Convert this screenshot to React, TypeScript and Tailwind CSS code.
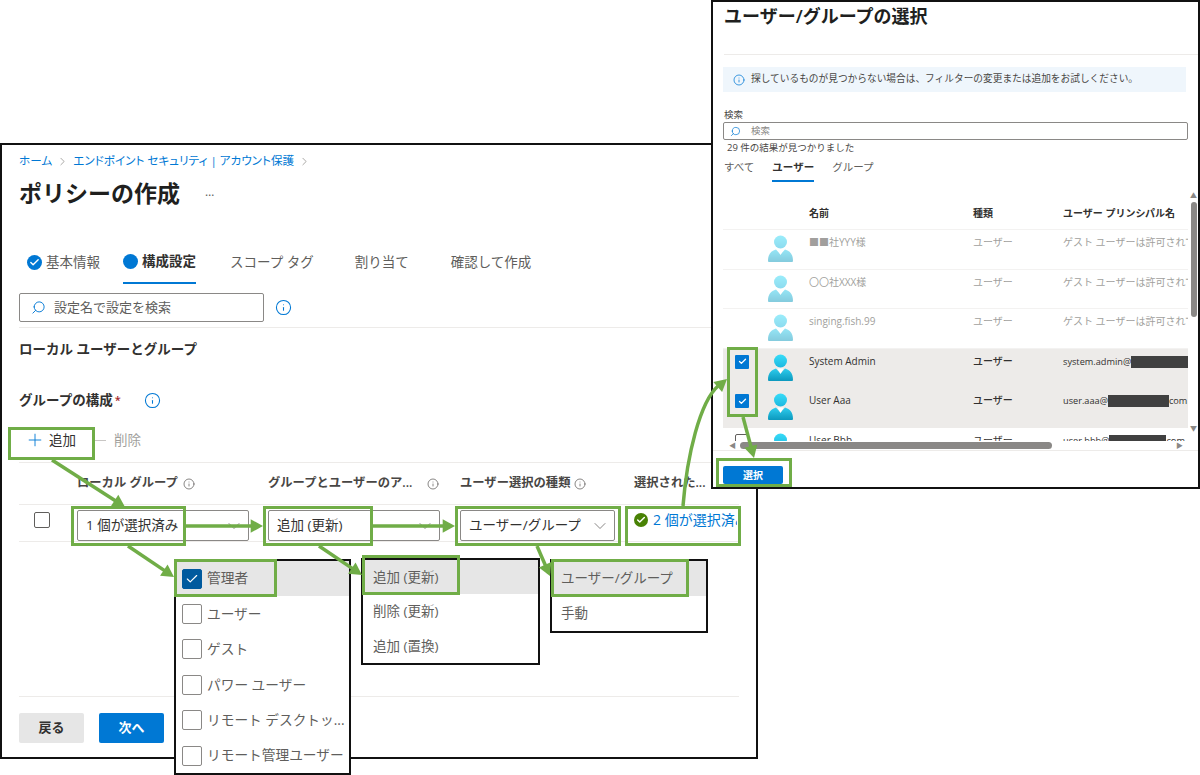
import { ChevronDown, ChevronRight, Check, Info, Plus, Search } from 'lucide-react';

const font = { fontFamily: '"Open Sans", "Noto Sans CJK JP", sans-serif' };

const greenBoxes = [
  [8, 427, 87, 33],
  [71, 506, 115, 40],
  [263, 506, 110, 40],
  [455, 506, 166, 40],
  [625, 506, 116, 40],
  [174, 559, 103, 38],
  [362, 555, 98, 40],
  [551, 559, 138, 38],
  [727, 347, 31, 70],
  [716, 458, 76, 29],
];

const straightArrows = [
  [52, 460, 125, 507],
  [128, 546, 174, 577],
  [186, 526, 263, 526],
  [319, 546, 362, 575],
  [373, 526, 455, 526],
  [537, 546, 550, 576],
  [743, 417, 754, 458],
];

function arrowHead(x1: number, y1: number, x2: number, y2: number) {
  const a = Math.atan2(y2 - y1, x2 - x1);
  const size = 14;
  const spread = 0.5;
  const p1 = [x2 - size * Math.cos(a - spread), y2 - size * Math.sin(a - spread)];
  const p2 = [x2 - size * Math.cos(a + spread), y2 - size * Math.sin(a + spread)];
  return `${x2},${y2} ${p1[0]},${p1[1]} ${p2[0]},${p2[1]}`;
}

function Annotations() {
  return (
    <svg className="absolute left-0 top-0 z-30 pointer-events-none" width="1200" height="775" fill="none">
      {greenBoxes.map(([x, y, w, h]) => (
        <rect key={`${x}-${y}`} x={x + 1.5} y={y + 1.5} width={w - 3} height={h - 3} stroke="#70ad47" strokeWidth="3" />
      ))}
      {straightArrows.map(([x1, y1, x2, y2]) => (
        <g key={`${x1}-${y1}`}>
          <line x1={x1} y1={y1} x2={x2 - (x2 - x1) * 0.1} y2={y2 - (y2 - y1) * 0.1} stroke="#70ad47" strokeWidth="3.5" />
          <polygon points={arrowHead(x1, y1, x2, y2)} fill="#70ad47" />
        </g>
      ))}
      <path d="M683 506C687 455 700 402 718 386" stroke="#70ad47" strokeWidth="3.5" />
      <polygon points={arrowHead(712, 392, 727, 379)} fill="#70ad47" />
    </svg>
  );
}

function InfoIcon({ big }: { big?: boolean }) {
  if (big) return <Info size={17} strokeWidth={1.5} className="text-[#0078d4] shrink-0" />;
  return <Info size={12} strokeWidth={1.5} className="text-[#605e5c] shrink-0" />;
}

function SelectBox({ label, className }: { label: string; className: string }) {
  return (
    <div className={`flex h-[31px] items-center justify-between rounded-[2px] border border-[#8a8886] pl-2 pr-[4px] text-[13.5px] text-[#323130] ${className}`}>
      <span className="whitespace-nowrap">{label}</span>
      <ChevronDown size={20} strokeWidth={0.9} className="text-[#605e5c]" />
    </div>
  );
}

function Tab({ label, state, className }: { label: string; state?: 'done' | 'current'; className?: string }) {
  return (
    <div className={`flex h-[39px] items-center gap-1 pb-[4px] text-[13.5px] ${state === 'current' ? 'border-b-2 border-[#0078d4] font-semibold text-[#323130]' : 'text-[#605e5c]'} ${className ?? ''}`}>
      {state === 'done' && (
        <span className="flex h-[15px] w-[15px] items-center justify-center rounded-full bg-[#0078d4]">
          <Check size={11} strokeWidth={3} className="text-white" />
        </span>
      )}
      {state === 'current' && <span className="h-[15px] w-[15px] rounded-full bg-[#0078d4]" />}
      <span className="whitespace-nowrap">{label}</span>
    </div>
  );
}

function PolicyWindow() {
  return (
    <div className="absolute left-0 top-[143px] flex h-[616px] w-[758px] flex-col border-2 border-[#111] bg-white pl-[17px] pr-[17px]">
      <div className="mt-[8px] flex h-[16px] items-center text-[11.6px] text-[#0078d4] [font-feature-settings:'palt']">
        <span>ホーム</span>
        <ChevronRight size={13} strokeWidth={1} className="mx-[4px] text-[#605e5c]" />
        <span>エンドポイント セキュリティ | アカウント保護</span>
        <ChevronRight size={13} strokeWidth={1} className="mx-[4px] text-[#605e5c]" />
      </div>
      <div className="mt-[7px] flex h-[34px] items-center">
        <h1 className="text-[23px] font-semibold leading-none text-[#201f1e]">ポリシーの作成</h1>
        <span className="ml-[25px] -translate-y-px text-[12px] text-[#605e5c]">…</span>
      </div>
      <div className="mt-[35px] flex pl-2">
        <Tab label="基本情報" state="done" />
        <Tab label="構成設定" state="current" className="ml-[23px]" />
        <Tab label="スコープ タグ" className="ml-[34px]" />
        <Tab label="割り当て" className="ml-[41px]" />
        <Tab label="確認して作成" className="ml-[42px]" />
      </div>
      <div className="mt-[9px] flex items-center gap-[11px]">
        <div className="flex h-[29px] w-[245px] items-center gap-[8px] rounded-[2px] border border-[#8a8886] pl-[11px] text-[13px] text-[#605e5c]">
          <Search size={15} strokeWidth={1.5} className="-scale-x-100 text-[#0078d4]" />
          <span>設定名で設定を検索</span>
        </div>
        <InfoIcon big />
      </div>
      <div className="mt-[5px] border-t border-[#edebe9]" />
      <div className="flex h-[42px] items-center text-[13.5px] font-semibold text-[#323130]">ローカル ユーザーとグループ</div>
      <div className="mt-[20px] flex h-[20px] items-center text-[13.5px] font-semibold text-[#323130]">
        <span>グループの構成</span>
        <span className="ml-[2px] text-[11px] text-[#a4262c]">*</span>
        <span className="ml-[23px]"><InfoIcon big /></span>
      </div>
      <div className="mt-[20px] flex h-[20px] items-center text-[13.5px]">
        <Plus size={20} strokeWidth={1.1} className="ml-[6px] text-[#0078d4]" />
        <span className="ml-[4px] text-[#323130]">追加</span>
        <span className="ml-[19px] h-px w-[11px] bg-[#c8c6c4]" />
        <span className="ml-[8px] text-[#a19f9d]">削除</span>
      </div>
      <div className="mt-[12px] grid h-[43px] grid-cols-[58px_191px_192px_174px_1fr] items-center border-y border-[#edebe9] text-[12.3px] font-semibold text-[#484644]">
        <span />
        <span className="flex items-center gap-[5px]">ローカル グループ <InfoIcon /></span>
        <span className="flex items-center gap-[15px]">グループとユーザーのア... <InfoIcon /></span>
        <span className="flex items-center gap-[4px]">ユーザー選択の種類 <InfoIcon /></span>
        <span>選択された...</span>
      </div>
      <div className="grid h-[37px] grid-cols-[58px_191px_192px_174px_1fr] items-end border-b border-[#edebe9]">
        <span className="mb-[13px] ml-[15px] h-[16px] w-[16px] rounded-[2px] border border-[#605e5c]" />
        <SelectBox label="1 個が選択済み" className="w-[172px]" />
        <SelectBox label="追加 (更新)" className="w-[172px]" />
        <SelectBox label="ユーザー/グループ" className="w-[155px]" />
        <div className="mb-[11px] flex w-[103px] items-center gap-[5px] overflow-hidden">
          <span className="flex h-[14px] w-[14px] shrink-0 items-center justify-center rounded-full bg-[#498205]">
            <Check size={10} strokeWidth={3.5} className="text-white" />
          </span>
          <span className="whitespace-nowrap text-[14px] text-[#0078d4]">2 個が選択済み</span>
        </div>
      </div>
      <div className="mt-[154px] flex gap-[15px] border-t border-[#edebe9] pt-[16px] text-[13px] font-semibold">
        <div className="flex h-[30px] w-[65px] items-center justify-center rounded-[2px] bg-[#e6e6e6] text-[#323130]">戻る</div>
        <div className="flex h-[30px] w-[65px] items-center justify-center rounded-[2px] bg-[#0078d4] text-white">次へ</div>
      </div>
    </div>
  );
}

function CheckBox({ checked }: { checked?: boolean }) {
  return (
    <span className={`flex h-[20px] w-[20px] shrink-0 items-center justify-center rounded-[2px] border ${checked ? 'border-[#005a9e] bg-[#005a9e]' : 'border-[#8a8886] bg-white'}`}>
      {checked && <Check size={14} strokeWidth={2} className="text-white" />}
    </span>
  );
}

function GroupMenu() {
  const rows = ['管理者', 'ユーザー', 'ゲスト', 'パワー ユーザー', 'リモート デスクトッ...', 'リモート管理ユーザー'];
  return (
    <div className="absolute left-[174px] top-[559px] z-20 w-[177px] border-2 border-[#111] bg-white">
      {rows.map((row, i) => (
        <div key={row} className={`flex h-[35.4px] items-center gap-[5px] pl-[6px] text-[13.7px] text-[#605e5c] whitespace-nowrap ${i === 0 ? 'bg-[#e6e6e6]' : ''}`}>
          <CheckBox checked={i === 0} />
          {row}
        </div>
      ))}
    </div>
  );
}

function PlainMenu({ rows, className, rowClass }: { rows: string[]; className: string; rowClass: string }) {
  return (
    <div className={`absolute z-20 border-2 border-[#111] bg-white ${className}`}>
      {rows.map((row, i) => (
        <div key={row} className={`flex items-center text-[13.5px] text-[#605e5c] whitespace-nowrap ${rowClass} ${i === 0 ? 'bg-[#e6e6e6]' : ''}`}>
          {row}
        </div>
      ))}
    </div>
  );
}

function Person({ faded }: { faded?: boolean }) {
  return (
    <svg width="25" height="28" viewBox="0 0 25 28" className={faded ? 'opacity-50' : ''}>
      <defs>
        <linearGradient id="personHead" x1="0" y1="0" x2="0" y2="1">
          <stop offset="0" stopColor="#38dcf8" />
          <stop offset="1" stopColor="#1cb8e0" />
        </linearGradient>
        <linearGradient id="personBody" x1="0" y1="0" x2="0" y2="1">
          <stop offset="0" stopColor="#2ecdee" />
          <stop offset="1" stopColor="#0c98bd" />
        </linearGradient>
      </defs>
      <circle cx="12.5" cy="7" r="6.5" fill="url(#personHead)" />
      <path d="M1 27a1 1 0 0 1-1-1c0-7 3-10 8-11.5l4.500 5 4.500-5c5 1.500 8 4.500 8 11.500a1 1 0 0 1-1 1z" fill="url(#personBody)" />
      <path d="M9.500 14.500h6L12.500 20z" fill="#fff" />
    </svg>
  );
}

const users = [
  { name: '■■社YYY様', upn: 'ゲスト ユーザーは許可されて', faded: true },
  { name: '〇〇社XXX様', upn: 'ゲスト ユーザーは許可されて', faded: true },
  { name: 'singing.fish.99', upn: 'ゲスト ユーザーは許可されて', faded: true },
  { name: 'System Admin', upn: 'system.admin@', bar: 'w-[62px]', checked: true },
  { name: 'User Aaa', upn: 'user.aaa@', bar: 'w-[61px]', tail: 'com', checked: true },
  { name: 'User Bbb', upn: 'user.bbb@', bar: 'w-[57px]', tail: 'com' },
];

function UserRow({ user }: { user: (typeof users)[number] }) {
  const textColor = user.faded ? 'text-[#a19f9d]' : 'text-[#323130]';
  return (
    <div className={`grid h-[39.5px] shrink-0 grid-cols-[45px_41px_164px_90px_1fr] text-[10px] ${user.checked ? 'bg-[#edebe9]' : 'border-b border-[#f3f2f1]'} ${textColor}`}>
      <span className="pl-[12px] pt-[6px]">
        {user.checked && (
          <span className="flex h-[14px] w-[14px] items-center justify-center rounded-[1px] bg-[#0078d4]">
            <Check size={9} strokeWidth={3.5} className="text-white" />
          </span>
        )}
        {!user.checked && !user.faded && <span className="block h-[14px] w-[14px] rounded-[2px] border border-[#605e5c]" />}
      </span>
      <span className="pt-[5px]"><Person faded={user.faded} /></span>
      <span className="pt-[5px] whitespace-nowrap">{user.name}</span>
      <span className={`pt-[5px] ${user.checked ? 'font-medium' : ''}`}>ユーザー</span>
      <span className="flex items-start overflow-hidden pt-[5px] whitespace-nowrap">
        <span className={user.bar ? 'text-[9.2px] leading-[15px]' : ''}>{user.upn}</span>
        {user.bar && <span className={`mt-[2px] h-[12px] shrink-0 bg-[#404040] ${user.bar}`} />}
        {user.tail && <span className="text-[9.2px] leading-[15px]">{user.tail}</span>}
      </span>
    </div>
  );
}

function PickerWindow() {
  return (
    <div className="absolute left-[711px] top-0 z-10 flex h-[489px] w-[489px] flex-col border-2 border-[#111] bg-white">
      <h2 className="ml-[11px] mt-px h-[26px] text-[18px] font-semibold leading-[26px] text-[#201f1e]">ユーザー/グループの選択</h2>
      <div className="ml-[11px] mt-[25px] border-t border-[#edebe9]" />
      <div className="ml-[10px] mr-[12px] mt-[12px] flex h-[25px] items-center gap-[6px] bg-[#eff6fc] pl-[10px] text-[9.7px] text-[#484644]">
        <Info size={12} strokeWidth={1.5} className="text-[#0078d4]" />
        探しているものが見つからない場合は、フィルターの変更または追加をお試しください。
      </div>
      <div className="ml-[11px] mt-[15px] h-[15px] text-[9.5px] leading-[15px] text-[#484644]">検索</div>
      <div className="ml-[10px] mr-[10px] flex h-[18px] items-center gap-[10px] rounded-[2px] border border-[#8a8886] pl-[6px] text-[9.5px] text-[#8a8886]">
        <Search size={11} strokeWidth={1.5} className="-scale-x-100 text-[#0078d4]" />
        検索
      </div>
      <div className="ml-[14px] h-[15px] text-[9.5px] leading-[15px] text-[#484644]">29 件の結果が見つかりました</div>
      <div className="ml-[11px] mt-[4px] flex h-[23px] gap-[18px] text-[10.5px] text-[#605e5c]">
        <span className="pt-[1px]">すべて</span>
        <span className="border-b-2 border-[#0078d4] pt-[1px] font-semibold text-[#323130]">ユーザー</span>
        <span className="pt-[1px]">グループ</span>
      </div>
      <div className="relative ml-[10px] mr-[10px] flex h-[268px] flex-col overflow-hidden">
        <div className="grid h-[48px] shrink-0 grid-cols-[86px_164px_90px_1fr] items-end border-b border-[#f3f2f1] pb-[8px] text-[10px] font-semibold text-[#323130]">
          <span />
          <span>名前</span>
          <span>種類</span>
          <span>ユーザー プリンシパル名</span>
        </div>
        {users.map(user => <UserRow key={user.name} user={user} />)}
        <div className="absolute bottom-0 left-0 right-0 flex h-[9px] items-center bg-white">
          <span className="ml-[6px] text-[7px] leading-none text-[#8a8886]">◀</span>
          <span className="ml-[4px] h-[7px] w-[312px] rounded-full bg-[#8a8886]" />
          <span className="ml-[124px] text-[7px] leading-none text-[#8a8886]">▶</span>
        </div>
      </div>
      <div className="absolute right-0 top-[190px] flex h-[240px] w-[9px] flex-col items-center bg-white">
        <span className="text-[7px] leading-none text-[#8a8886]">▲</span>
        <span className="mt-[3px] h-[115px] w-[6px] rounded-full bg-[#8a8886]" />
        <span className="mt-auto text-[7px] leading-none text-[#8a8886]">▼</span>
      </div>
      <div className="border-t border-[#edebe9]" />
      <div className="ml-[10px] mt-[15px] flex h-[18px] w-[60px] items-center justify-center rounded-[2px] bg-[#0078d4] text-[10px] font-semibold text-white">選択</div>
    </div>
  );
}

export default function App() {
  return (
    <div className="relative h-[775px] w-[1200px] overflow-hidden bg-white" style={font}>
      <PolicyWindow />
      <PickerWindow />
      <GroupMenu />
      <PlainMenu rows={['追加 (更新)', '削除 (更新)', '追加 (置換)']} className="left-[361px] top-[558px] w-[179px]" rowClass="h-[34.3px] pl-[10px]" />
      <PlainMenu rows={['ユーザー/グループ', '手動']} className="left-[550px] top-[559px] w-[158px]" rowClass="h-[35px] pl-[9px]" />
      <Annotations />
    </div>
  );
}
